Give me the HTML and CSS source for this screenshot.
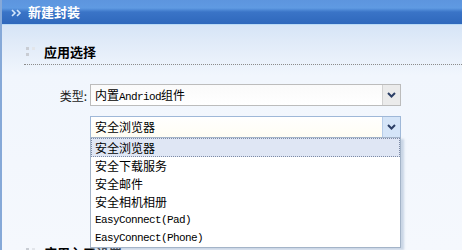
FILE: index.html
```html
<!DOCTYPE html>
<html lang="zh-CN">
<head>
  <meta charset="UTF-8">
  <title>新建封装</title>
  <link rel="stylesheet" href="styles.css">
</head>
<body>

  <div class="panel">
    <div class="panel-head">
      <svg class="head-icon" width="12" height="8" viewBox="0 0 12 8">
        <polyline points="1,1 4,4 1,7" fill="none" stroke="#d4e6fb" stroke-width="1.6"/>
        <polyline points="6,1 9,4 6,7" fill="none" stroke="#d4e6fb" stroke-width="1.6"/>
      </svg>
      新建封装
    </div>

    <div class="panel-body">
      <div class="section-title">
        <svg class="dots" width="10" height="12" viewBox="0 0 10 12">
          <rect x="0" y="1" width="3" height="3" fill="#c9cdd4"/>
          <rect x="0" y="7" width="3" height="3" fill="#c9cdd4"/>
          <rect x="6" y="1" width="3" height="3" fill="#e2e5ea"/>
        </svg>
        应用选择
      </div>

      <div class="form-row">
        <label class="form-label">类型:</label>
        <div class="combo">
          <div class="combo-text">内置<span class="en">Andriod</span>组件</div>
          <div class="combo-btn">
            <svg width="9" height="6" viewBox="0 0 9 6"><path d="M1 1 L4.5 4.5 L8 1" fill="none" stroke="#2c3f66" stroke-width="2"/></svg>
          </div>
        </div>
      </div>

      <div class="form-row">
        <label class="form-label"></label>
        <div class="combo combo-open">
          <div class="combo-text">安全浏览器</div>
          <div class="combo-btn">
            <svg width="9" height="6" viewBox="0 0 9 6"><path d="M1 1 L4.5 4.5 L8 1" fill="none" stroke="#2c3f66" stroke-width="2"/></svg>
          </div>
          <ul class="combo-list">
            <li class="selected">安全浏览器</li>
            <li>安全下载服务</li>
            <li>安全邮件</li>
            <li>安全相机相册</li>
            <li class="en">EasyConnect(Pad)</li>
            <li class="en">EasyConnect(Phone)</li>
          </ul>
        </div>
      </div>

      <div class="section-title section-next">
        <svg class="dots" width="10" height="12" viewBox="0 0 10 12">
          <rect x="0" y="1" width="3" height="3" fill="#c9cdd4"/>
          <rect x="0" y="7" width="3" height="3" fill="#c9cdd4"/>
          <rect x="6" y="1" width="3" height="3" fill="#e2e5ea"/>
        </svg>
        应用入口设置
      </div>
    </div>
  </div>

</body>
</html>
```

FILE: styles.css
```css
body {
  margin: 0;
  font-family: "Noto Sans CJK SC", sans-serif;
  font-size: 12px;
  color: #000;
  background: #f3f7fd;
  overflow: hidden;
}
.panel {
  border-left: 2px solid #86a9d8;
  height: 250px;
  background: linear-gradient(#c7dcf4 0px, #dfeaf8 40px, #f1f6fd 75px, #f5f8fd 100%);
}
.panel-head {
  height: 24px;
  line-height: 24px;
  border-bottom: 1px solid #b9daf6;
  background: linear-gradient(#5d95de 0px, #5f9ae2 8px, #3a74c7 12px, #2f68bc 100%);
  color: #fff;
  font-weight: bold;
  font-size: 13px;
  padding-left: 9px;
  display: flex;
  align-items: center;
  gap: 5px;
}
.head-icon {
  margin-top: 1px;
}
.panel-body {
  padding-top: 15px;
}
.section-title {
  margin-left: 22px;
  height: 24px;
  line-height: 24px;
  border-bottom: 1px dotted #8c8c8c;
  font-size: 13px;
  font-weight: bold;
  display: flex;
  align-items: center;
  gap: 8px;
  padding-left: 2px;
}
.section-next {
  margin-top: 103px;
}
.form-row {
  display: flex;
  align-items: center;
  margin-top: 19px;
}
.form-row + .form-row {
  margin-top: 10px;
}
.form-label {
  width: 85px;
  text-align: right;
  margin-right: 3px;
  color: #1a1a1a;
}
.combo {
  position: relative;
  width: 309px;
  height: 20px;
  border: 1px solid #bcbcbc;
  background: linear-gradient(#fafafa, #fff);
  display: flex;
}
.combo-text {
  flex: 1;
  padding-left: 4px;
  line-height: 20px;
  white-space: nowrap;
}
.combo-btn {
  width: 17px;
  border-left: 1px solid #d2d2d2;
  background: #ebebeb;
  display: flex;
  align-items: center;
  justify-content: center;
}
.combo-open {
  border-color: #9fb8d8;
  background: linear-gradient(#fff, #fffdf3);
}
.combo-open .combo-btn {
  background: #d5e5f8;
  border-left-color: #b7cde8;
}
.en {
  font-family: "Liberation Mono", monospace;
  font-size: 11px;
  letter-spacing: -0.6px;
}
.combo-list {
  position: absolute;
  top: 20px;
  left: -1px;
  width: 309px;
  margin: 0;
  padding: 0;
  list-style: none;
  background: #fff;
  border: 1px solid #a4b4c8;
  box-shadow: 3px 2px 2px rgba(160, 180, 205, 0.5);
  z-index: 5;
}
.combo-list li {
  height: 18px;
  line-height: 18px;
  padding-left: 4px;
  white-space: nowrap;
}
.combo-list li.selected {
  background: #dfe6f4;
  border: 1px dotted #7d8aa6;
  padding-left: 3px;
  height: 17px;
  line-height: 17px;
}
```
